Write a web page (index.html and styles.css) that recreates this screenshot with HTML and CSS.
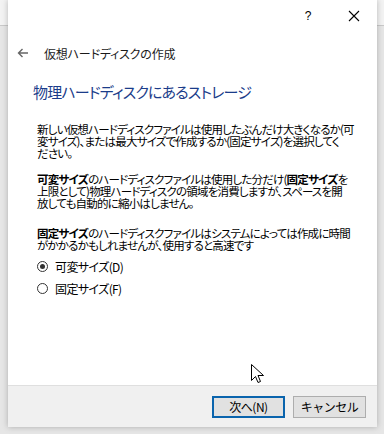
FILE: index.html
```html
<!DOCTYPE html>
<html lang="ja">
<head>
    <meta charset="UTF-8">
    <link rel="stylesheet" href="styles.css">
</head>
<body>
    <div class="dialog">
        <div class="titlebar">
            <span class="help">?</span>
            <span class="close">
                <svg width="12" height="12" viewBox="0 0 12 12"><path d="M1 1L11 11M11 1L1 11" stroke="#000" stroke-width="1.1" fill="none"/></svg>
            </span>
        </div>
        <div class="nav">
            <svg class="back" width="12" height="10" viewBox="0 0 12 10"><path d="M11 5H1.5M5.5 1L1.5 5L5.5 9" stroke="#666" stroke-width="1.4" fill="none"/></svg>
            <span class="nav-title">仮想ハードディスクの作成</span>
        </div>
        <div class="content">
            <h1 class="heading">物理ハードディスクにあるストレージ</h1>
            <p class="text first">新しい仮想ハードディスクファイルは使用したぶんだけ大きくなるか(可<br>変サイズ)、または最大サイズで作成するか(固定サイズ)を選択してく<br>ださい。</p>
            <p class="text"><b>可変サイズ</b>のハードディスクファイルは使用した分だけ(<b>固定サイズ</b>を<br>上限として)物理ハードディスクの領域を消費しますが、スペースを開<br>放しても自動的に縮小はしません。</p>
            <p class="text last"><b>固定サイズ</b>のハードディスクファイルはシステムによっては作成に時間<br>がかかるかもしれませんが、使用すると高速です</p>
            <div class="options">
                <label class="option"><span class="radio checked"></span>可変サイズ(D)</label>
                <label class="option"><span class="radio"></span>固定サイズ(F)</label>
            </div>
        </div>
        <div class="footer">
            <button class="btn default">次へ(N)</button>
            <button class="btn">キャンセル</button>
        </div>
        <svg class="cursor" width="13" height="20" viewBox="0 0 13 20"><path d="M0.5 0.5V16.5L4.5 12.5L7 18.5L9.5 17.5L7 11.5H12.5Z" fill="#fff" stroke="#000" stroke-width="1"/></svg>
    </div>
</body>
</html>
```

FILE: styles.css
```css
html, body {
    margin: 0;
    padding: 0;
}
body {
    width: 384px;
    height: 434px;
    overflow: hidden;
    background: linear-gradient(#f3f3f3 0, #f3f3f3 25px, #c9c9c9 25px, #c9c9c9 26px, #e6e6e6 26px);
    font-family: "Noto Sans CJK JP", "Noto Sans", sans-serif;
    font-feature-settings: "palt";
    color: #000;
}
.dialog {
    position: relative;
    margin-left: 8px;
    width: 369px;
    height: 427px;
    background: #fff;
    box-shadow: 0 0 6px rgba(0, 0, 0, 0.25);
    display: flex;
    flex-direction: column;
}
.titlebar {
    height: 31px;
    display: flex;
    justify-content: flex-end;
    align-items: center;
}
.help {
    font-family: "Liberation Sans", sans-serif;
    font-size: 12px;
    width: 46px;
    text-align: center;
}
.close {
    width: 46px;
    display: flex;
    justify-content: center;
}
.nav {
    height: 44px;
    display: flex;
    align-items: center;
    padding-left: 9px;
}
.back {
    margin-right: 15px;
}
.nav-title {
    font-size: 12px;
    color: #1a1a1a;
    letter-spacing: -0.2px;
}
.content {
    flex: 1;
    padding: 0 0 0 29px;
}
.heading {
    margin: 6px 0 0 -4px;
    font-size: 15px;
    font-weight: normal;
    color: #1b3c8a;
    line-height: 22px;
    letter-spacing: -0.85px;
}
.text {
    margin: 14px 0 0;
    font-size: 11.5px;
    line-height: 12px;
    letter-spacing: -0.8px;
    white-space: nowrap;
}
.text.first {
    margin-top: 20px;
}
.text.last {
    margin-top: 18px;
}
.text b {
    font-weight: bold;
}
.options {
    margin-top: 9px;
    display: flex;
    flex-direction: column;
    gap: 9px;
}
.option {
    display: flex;
    align-items: center;
    font-size: 12px;
    line-height: 13px;
    letter-spacing: -0.6px;
}
.radio {
    width: 11px;
    height: 11px;
    border: 1px solid #333;
    border-radius: 50%;
    margin-right: 7px;
    box-sizing: border-box;
    display: flex;
    align-items: center;
    justify-content: center;
}
.radio.checked::after {
    content: "";
    width: 5px;
    height: 5px;
    border-radius: 50%;
    background: #333;
}
.footer {
    height: 41px;
    background: #f0f0f0;
    border-top: 1px solid #dfdfdf;
    display: flex;
    justify-content: flex-end;
    align-items: center;
    gap: 8px;
    padding-right: 11px;
}
.btn {
    width: 73px;
    height: 22px;
    background: #e1e1e1;
    border: 1px solid #adadad;
    font-family: inherit;
    font-size: 12px;
    letter-spacing: -0.5px;
    padding: 0;
    color: #000;
}
.btn.default {
    border: 2px solid #0a64ad;
}
.cursor {
    position: absolute;
    left: 243px;
    top: 364px;
}
```
